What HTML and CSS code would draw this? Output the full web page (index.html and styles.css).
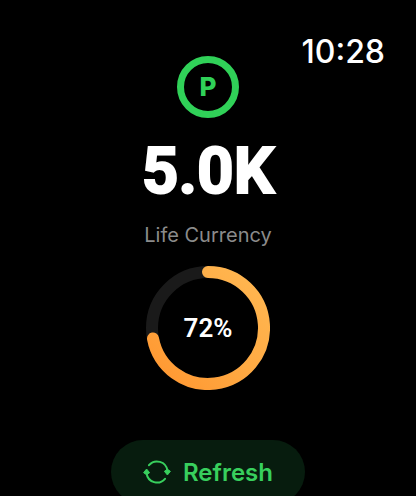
FILE: index.html
```html
<!DOCTYPE html>
<html lang="en">
<head>
    <meta charset="UTF-8">
    <meta name="viewport" content="width=device-width, initial-scale=1.0">
    <title>Life Currency</title>
    <link rel="stylesheet" href="styles.css">
</head>
<body>
    <header class="status-bar">
        <time class="clock">10:28</time>
    </header>

    <main class="container">
        <div class="coin">P</div>
        <h1 class="balance">5.0K</h1>
        <p class="label">Life Currency</p>

        <div class="progress" role="img" aria-label="72 percent">
            <svg class="ring" viewBox="0 0 124 124">
                <defs>
                    <linearGradient id="ringColor" x1="1" y1="0" x2="0" y2="1">
                        <stop offset="0" stop-color="#ffb852"/>
                        <stop offset="0.5" stop-color="#ffaa43"/>
                        <stop offset="1" stop-color="#ff9630"/>
                    </linearGradient>
                </defs>
                <circle class="ring-track" cx="62" cy="62" r="56"/>
                <path class="ring-value" d="M62 6A56 56 0 1 1 7 72.5"/>
            </svg>
            <span class="percent">72%</span>
        </div>

        <button class="refresh" type="button">
            <svg class="refresh-icon" viewBox="0 0 28 24">
                <path class="arc" d="M6 5.2A10.5 10.5 0 0 1 24.4 10.5M22 18.8A10.5 10.5 0 0 1 3.6 13.5"/>
                <path class="tip" d="M21.4 11.3L24.4 9.3L27.4 11.3L24.4 15zM0.6 12.7L3.6 9L6.6 12.7L3.6 14.7z"/>
            </svg>
            Refresh
        </button>
    </main>
</body>
</html>
```
FILE: styles.css
```css
body {
    margin: 0;
    background: #000;
    color: #fff;
    font-family: Inter, "Liberation Sans", sans-serif;
    overflow: hidden;
}
.status-bar {
    display: flex;
    justify-content: flex-end;
    padding: 32px 31px 0;
    height: 24px;
}
.clock {
    font-size: 32px;
    font-weight: 500;
    line-height: 40px;
}
.container {
    display: flex;
    flex-direction: column;
    align-items: center;
}
.coin {
    box-sizing: border-box;
    width: 62px;
    height: 62px;
    border: 7px solid #30d158;
    border-radius: 50%;
    color: #30d158;
    font-size: 26px;
    font-weight: 800;
    line-height: 48px;
    text-align: center;
}
.balance {
    margin: 18px 0 14px;
    font-family: Roboto, "Liberation Sans", sans-serif;
    font-size: 64px;
    font-weight: 700;
    line-height: 72px;
    -webkit-text-stroke: 2px #fff;
}
.label {
    margin: 0;
    color: #8b8b8b;
    font-size: 20px;
    line-height: 26px;
}
.progress {
    display: grid;
    place-items: center;
    margin: 18px 0 50px;
}
.ring, .percent {
    grid-area: 1 / 1;
}
.ring {
    display: block;
    width: 124px;
    height: 124px;
    fill: none;
    stroke-width: 12;
}
.ring-track {
    stroke: #1a1a1a;
}
.ring-value {
    stroke: url(#ringColor);
    stroke-linecap: round;
}
.percent {
    font-family: Roboto, "Liberation Sans", sans-serif;
    font-size: 26px;
    font-weight: 600;
}
.refresh {
    display: flex;
    align-items: center;
    gap: 12px;
    height: 64px;
    padding: 0 32px;
    border: none;
    border-radius: 32px;
    background: #071c0e;
    color: #38cf5d;
    font-family: inherit;
    font-size: 24px;
    font-weight: 600;
}
.refresh-icon {
    width: 28px;
    height: 24px;
}
.arc {
    fill: none;
    stroke: currentColor;
    stroke-width: 2;
    stroke-linecap: round;
}
.tip {
    fill: currentColor;
    stroke: currentColor;
    stroke-linejoin: round;
}
```
